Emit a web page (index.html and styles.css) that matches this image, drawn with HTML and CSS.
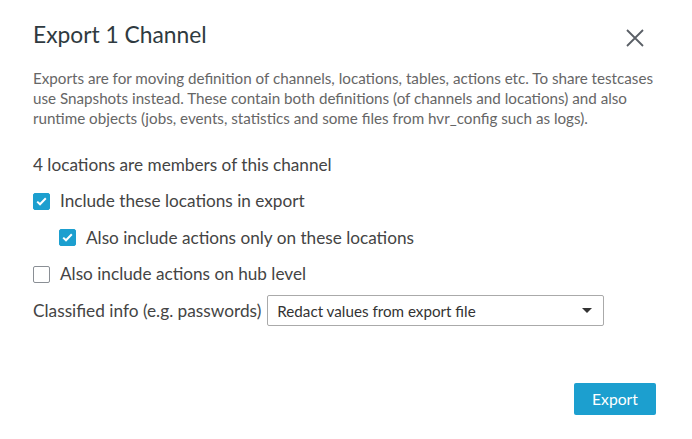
FILE: index.html
```html
<!DOCTYPE html>
<html>
<head>
<meta charset="utf-8">
<link rel="stylesheet" href="styles.css">
</head>
<body>
<div class="dialog">
  <div class="header">
    <h1 class="title">Export 1 Channel</h1>
    <button class="close" aria-label="Close">
      <svg width="18" height="18" viewBox="0 0 18 18"><path d="M1 1L17 17M17 1L1 17" stroke="#5a5f66" stroke-width="1.8" fill="none"/></svg>
    </button>
  </div>
  <p class="desc">Exports are for moving definition of channels, locations, tables, actions etc. To share testcases use Snapshots instead. These contain both definitions (of channels and locations) and also runtime objects (jobs, events, statistics and some files from hvr_config such as logs).</p>
  <p class="members">4 locations are members of this channel</p>
  <div class="options">
    <label class="check">
      <span class="box on"><svg width="11" height="9" viewBox="0 0 11 9"><path d="M1.2 4.6L4 7.3L9.8 1.3" stroke="#fff" stroke-width="2" fill="none"/></svg></span>
      <span>Include these locations in export</span>
    </label>
    <label class="check sub">
      <span class="box on"><svg width="11" height="9" viewBox="0 0 11 9"><path d="M1.2 4.6L4 7.3L9.8 1.3" stroke="#fff" stroke-width="2" fill="none"/></svg></span>
      <span>Also include actions only on these locations</span>
    </label>
    <label class="check">
      <span class="box"></span>
      <span>Also include actions on hub level</span>
    </label>
  </div>
  <div class="field">
    <span class="field-label">Classified info (e.g. passwords)</span>
    <div class="select">
      <span>Redact values from export file</span>
      <span class="caret"></span>
    </div>
  </div>
  <div class="footer">
    <button class="btn">Export</button>
  </div>
</div>
</body>
</html>
```
FILE: styles.css
```css
html, body {
  margin: 0;
  padding: 0;
  background: #fff;
}
body {
  font-family: Lato, "Open Sans", sans-serif;
  color: #444;
}
.dialog {
  width: 692px;
  height: 439px;
  box-sizing: border-box;
  padding: 20px 36px 0 33px;
  display: flex;
  flex-direction: column;
}
.header {
  display: flex;
  justify-content: space-between;
  align-items: flex-start;
  height: 36px;
}
.title {
  margin: 0;
  font-weight: 400;
  font-size: 22.8px;
  line-height: 28px;
  color: #2f3a40;
}
.close {
  border: 0;
  background: none;
  padding: 0;
  margin: 9px 12px 0 0;
  width: 18px;
  height: 18px;
  display: flex;
}
.desc {
  margin: 12px 0 0;
  font-size: 15.2px;
  line-height: 20px;
  color: #666;
}
.members {
  margin: 26px 0 0;
  font-size: 17.2px;
  line-height: 22px;
  color: #444;
}
.options {
  display: flex;
  flex-direction: column;
  gap: 14.5px;
  margin-top: 14px;
}
.check {
  display: flex;
  align-items: center;
  gap: 10px;
  font-size: 17.2px;
  line-height: 22px;
  color: #444;
}
.check.sub {
  padding-left: 26px;
}
.box {
  width: 17px;
  height: 17px;
  box-sizing: border-box;
  border: 1px solid #8a8f95;
  border-radius: 2px;
  background: #fff;
  display: flex;
  align-items: center;
  justify-content: center;
}
.box.on {
  background: #1c9fcf;
  border-color: #1c9fcf;
}
.field {
  display: flex;
  align-items: center;
  gap: 6px;
  margin-top: 10px;
}
.field-label {
  font-size: 17.25px;
  color: #444;
}
.select {
  width: 337px;
  height: 31px;
  box-sizing: border-box;
  border: 1px solid #aaa;
  border-radius: 2px;
  display: flex;
  align-items: center;
  justify-content: space-between;
  padding: 0 11px 0 9px;
  font-size: 15.2px;
  color: #333;
}
.caret {
  width: 0;
  height: 0;
  border-left: 5px solid transparent;
  border-right: 5px solid transparent;
  border-top: 5px solid #333;
}
.footer {
  display: flex;
  justify-content: flex-end;
  margin-top: 57px;
}
.btn {
  width: 82px;
  height: 32px;
  border: 0;
  border-radius: 2px;
  background: #1c9fcf;
  color: #fff;
  font-family: Lato, "Open Sans", sans-serif;
  font-size: 15.7px;
  margin-right: 0;
}
```
